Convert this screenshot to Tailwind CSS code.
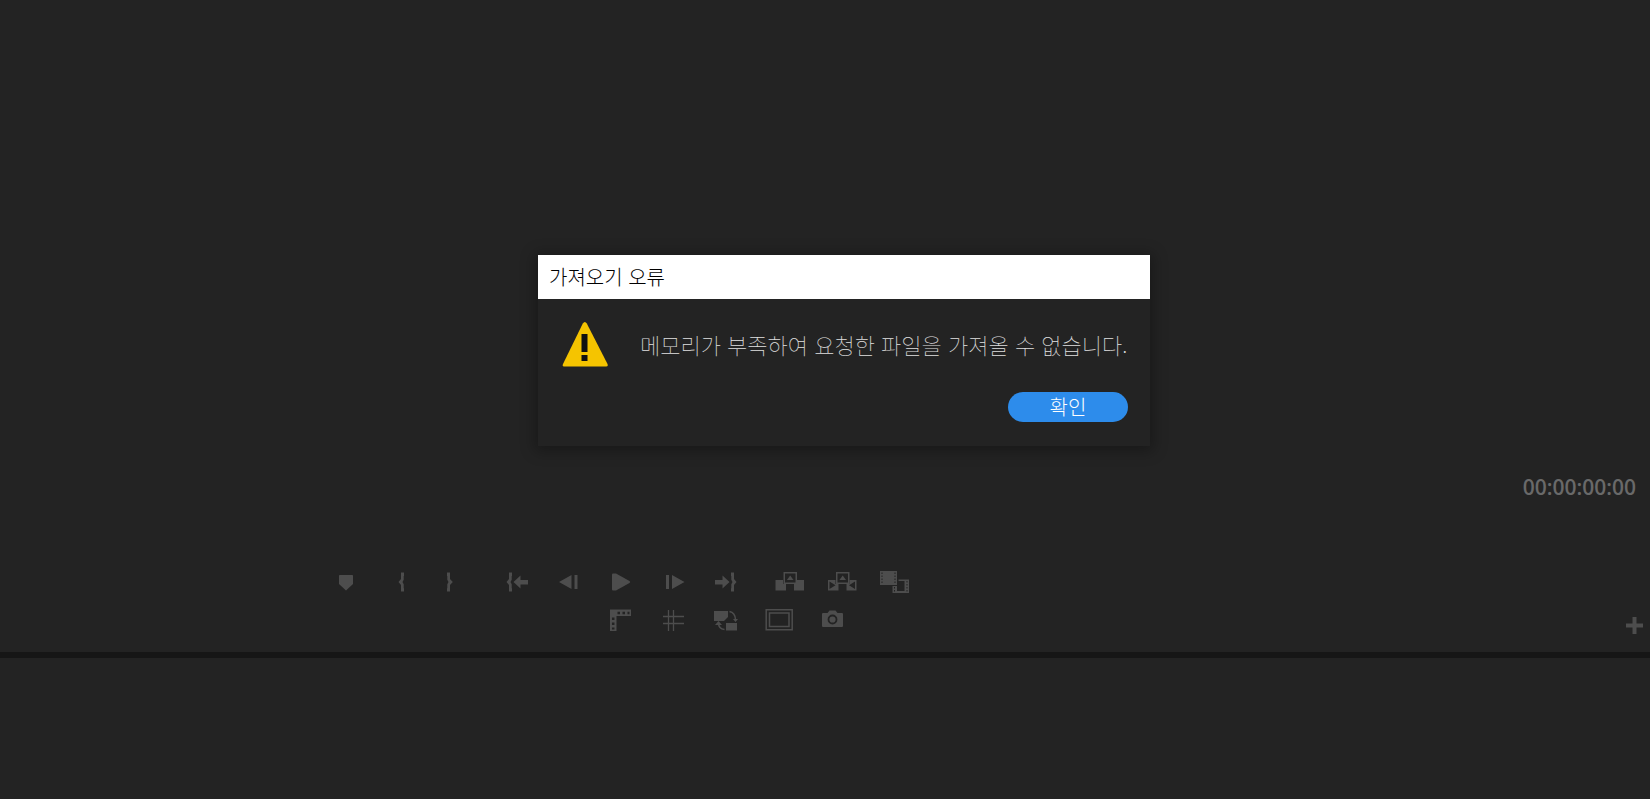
<!DOCTYPE html>
<html lang="ko">
<head>
<meta charset="utf-8">
<meta name="viewport" content="width=device-width, initial-scale=1">
<title>가져오기 오류</title>
<script src="https://cdn.jsdelivr.net/npm/@tailwindcss/browser@4"></script>
</head>
<body class="relative flex min-h-screen flex-col overflow-hidden bg-[#232323] font-['Noto_Sans_CJK_KR',sans-serif] text-[#4d4d4d]">

<!-- Program monitor -->
<main class="flex flex-1 flex-col">
  <div class="flex flex-1 items-end justify-end pr-[14px] pb-[62px]">
    <time class="font-['Open_Sans',sans-serif] text-[21px] leading-[30px] font-semibold text-[#696969]">00:00:00:00</time>
  </div>
  <div class="relative flex flex-col gap-px pb-[15px]">
    <div class="flex h-9 items-center pl-[319px]">
      <button type="button" aria-label="마커 추가" class="mr-2 flex w-[52px] justify-center">
        <svg class="h-6 w-[30px]" viewBox="0 0 30 24" fill="currentColor"><path d="M9 5.700q0-.7.7-.7h12.600q.7 0 .7.7V14l-7 6.500L9 14z"/></svg>
      </button>
      <button type="button" aria-label="시작 표시" class="mr-px flex w-[46px] justify-center">
        <svg class="h-6 w-[30px]" viewBox="0 0 30 24" fill="currentColor"><path d="M17 2.500v3.500h-.3v3.700L15.500 12l1.200 2.300v4h.3V21.500h-3v-6.500l-2.500-3L14 9V2.500z"/></svg>
      </button>
      <button type="button" aria-label="종료 표시" class="mr-5 flex w-[46px] justify-center">
        <svg class="h-6 w-[30px]" viewBox="0 0 30 24" fill="currentColor"><path d="M13 2.500v3.500h.3v3.700L14.500 12l-1.200 2.300v4H13V21.500h3v-6.500l2.800-3L16 9V2.500z"/></svg>
      </button>
      <button type="button" aria-label="시작 지점으로 이동" class="flex w-[52px] justify-center">
        <svg class="h-6 w-[30px]" viewBox="0 0 30 24" fill="currentColor"><path d="M9 2.500v3.500h-.3v3.700L7.500 12l1.200 2.300v4H9V21.500H6v-6.500l-2.500-3L6 9V2.500zM10.500 12l7-6.500V10H25v4.500h-7.500V18.500z"/></svg>
      </button>
      <button type="button" aria-label="1프레임 이전" class="flex w-[52px] justify-center">
        <svg class="h-6 w-[30px]" viewBox="0 0 30 24" fill="currentColor"><path d="M4 12L16.500 5v14zM19.500 5H22.500v14h-3z"/></svg>
      </button>
      <button type="button" aria-label="재생" class="flex w-[52px] justify-center">
        <svg class="h-6 w-[30px]" viewBox="0 0 30 24" fill="currentColor"><path d="M5 4.500q0-1 1-1h3L22.500 11q1.500 1 0 2L9 20.500H6q-1 0-1-1z"/></svg>
      </button>
      <button type="button" aria-label="1프레임 다음" class="flex w-[52px] justify-center">
        <svg class="h-6 w-[30px]" viewBox="0 0 30 24" fill="currentColor"><path d="M25.500 12L13 5v14zM7 5h3v14H7z"/></svg>
      </button>
      <button type="button" aria-label="종료 지점으로 이동" class="mr-3 flex w-[52px] justify-center">
        <svg class="h-6 w-[30px]" viewBox="0 0 30 24" fill="currentColor"><path d="M20 2.500v3.500h.3v3.700L21.500 12l-1.200 2.300v4H20V21.500h3v-6.500l2.500-3L23 9V2.500zM18.500 12l-7-6.500V10H4v4.500h7.500V18.500z"/></svg>
      </button>
      <button type="button" aria-label="제거" class="flex w-[52px] justify-center">
        <svg class="h-6 w-[30px]" viewBox="0 0 30 24" fill="currentColor"><path d="M.5 10H8v4h3v6.500H.5zM29 10h-7v4h-3v6.500h10z"/><path fill-rule="evenodd" d="M8.500 2H22v12H8.500zM10 3.500v9h10.500v-9z"/><path d="M15.200 5.500l3.300 4.500h-6.600z"/></svg>
      </button>
      <button type="button" aria-label="추출" class="flex w-[52px] justify-center">
        <svg class="h-6 w-[30px]" viewBox="0 0 30 24" fill="currentColor"><path fill-rule="evenodd" d="M1 10h7.500v4h3v6.500H1zM2.500 11.500v7.500l6-3.800zM29.500 10h-7v4h-3v6.500h10zM28 11.500v7.500l-6-3.800z"/><path fill-rule="evenodd" d="M9 2h13.500v12H9zM10.500 3.500v9H21v-9z"/><path d="M15.700 5.500l3.300 4.500h-6.600z"/></svg>
      </button>
      <button type="button" aria-label="비교 보기" class="flex w-[52px] justify-center">
        <svg class="h-6 w-[30px]" viewBox="0 0 30 24"><path fill="currentColor" d="M1 1h17v14H1z"/><path fill="currentColor" fill-rule="evenodd" d="M19.500 9.500H30V23H13.500v-7H18v5h7.500V11h-6z"/><path stroke="#232323" stroke-dasharray="1.500 1.500" d="M3 2.500v12M16 2.500v12M15.500 17v5M28 11v11"/></svg>
      </button>
    </div>
    <div class="flex h-9 items-center gap-px pl-[594px]">
      <button type="button" aria-label="눈금자 표시" class="flex w-[52px] justify-center">
        <svg class="h-6 w-[30px]" viewBox="0 0 30 24"><path fill="currentColor" d="M5 2.500h21v6.500H11.500v15H5z"/><path stroke="#232323" stroke-width="2.500" stroke-dasharray="2.500 2.500" d="M12.500 6h12M8.200 10.500v12"/></svg>
      </button>
      <button type="button" aria-label="안내선 표시" class="flex w-[52px] justify-center">
        <svg class="h-6 w-[30px]" viewBox="0 0 30 24" stroke="currentColor" stroke-width="1.300"><path d="M5 9.500h21M5 16.500h21M10.500 3v21M15.500 3v21"/></svg>
      </button>
      <button type="button" aria-label="프록시 전환" class="flex w-[52px] justify-center">
        <svg class="h-6 w-[30px]" viewBox="0 0 30 24" fill="currentColor"><path d="M3 4h14v6l-4 4H3zM15 16h11v7.500H15z"/><path fill="none" stroke="currentColor" stroke-width="1.500" d="M7.500 16q0 6 6 6.500M18.500 4.500q5.500 1 6 8"/><path d="M4 18l3.500-4 3.500 4zM22 12h5l-2.500 3z"/></svg>
      </button>
      <button type="button" aria-label="보호 여백" class="flex w-[52px] justify-center">
        <svg class="h-6 w-[30px]" viewBox="0 0 30 24" fill="none" stroke="currentColor"><path stroke-width="1.500" d="M2.200 2.700h26v20h-26zM5.500 6H25v13.500H5.500z"/></svg>
      </button>
      <button type="button" aria-label="프레임 내보내기" class="flex w-[52px] justify-center">
        <svg class="h-6 w-[30px]" viewBox="0 0 30 24"><path fill="currentColor" d="M6 6h4.500l2-2.500h6l2 2.500H25q1 0 1 1v12q0 1-1 1H6q-1 0-1-1V7q0-1 1-1z"/><circle cx="15.500" cy="12.500" r="4" fill="none" stroke="#232323" stroke-width="1.800"/></svg>
      </button>
    </div>
    <button type="button" aria-label="단추 편집기" class="absolute right-[7px] bottom-[18px]">
      <svg class="size-[17px]" viewBox="0 0 17 17" fill="currentColor"><path d="M6.500 0h4v6.500H17v4h-6.500V17h-4v-6.500H0v-4h6.500z"/></svg>
    </button>
  </div>
</main>

<!-- Lower panel -->
<section class="h-[147px] border-t-6 border-[#161616]"></section>

<!-- Import error window -->
<div role="alertdialog" aria-labelledby="dialog-title" aria-describedby="dialog-text" class="absolute top-[255px] left-[538px] w-[612px] bg-[#232323] shadow-[0_2px_14px_3px_rgba(0,0,0,0.3)]">
  <h1 id="dialog-title" class="flex h-11 items-center bg-white pl-[11px] text-[20px] leading-6 font-light text-black">가져오기 오류</h1>
  <div class="flex items-center pt-[22px] pl-6">
    <svg class="h-[46px] w-[46px] shrink-0" viewBox="0 0 46 46"><path fill="#f5c400" d="M20.800 2.500q2-3.200 4 0L45.500 43q1 2.500-1.500 2.500H2Q0 45.500 1 43z"/><path fill="#111" d="M19.500 13h6v18h-6zM19.500 34h6v6h-6z"/></svg>
    <p id="dialog-text" class="ml-8 text-[22px] leading-8 font-thin whitespace-nowrap text-[#e0e0e0]">메모리가 부족하여 요청한 파일을 가져올 수 없습니다.</p>
  </div>
  <div class="flex justify-end pt-[25px] pr-[22px] pb-6">
    <button type="button" class="flex h-[30px] w-[120px] items-center justify-center rounded-full bg-[#2d8ceb] text-[20px] leading-[30px] font-light text-white">확인</button>
  </div>
</div>
</body>
</html>
